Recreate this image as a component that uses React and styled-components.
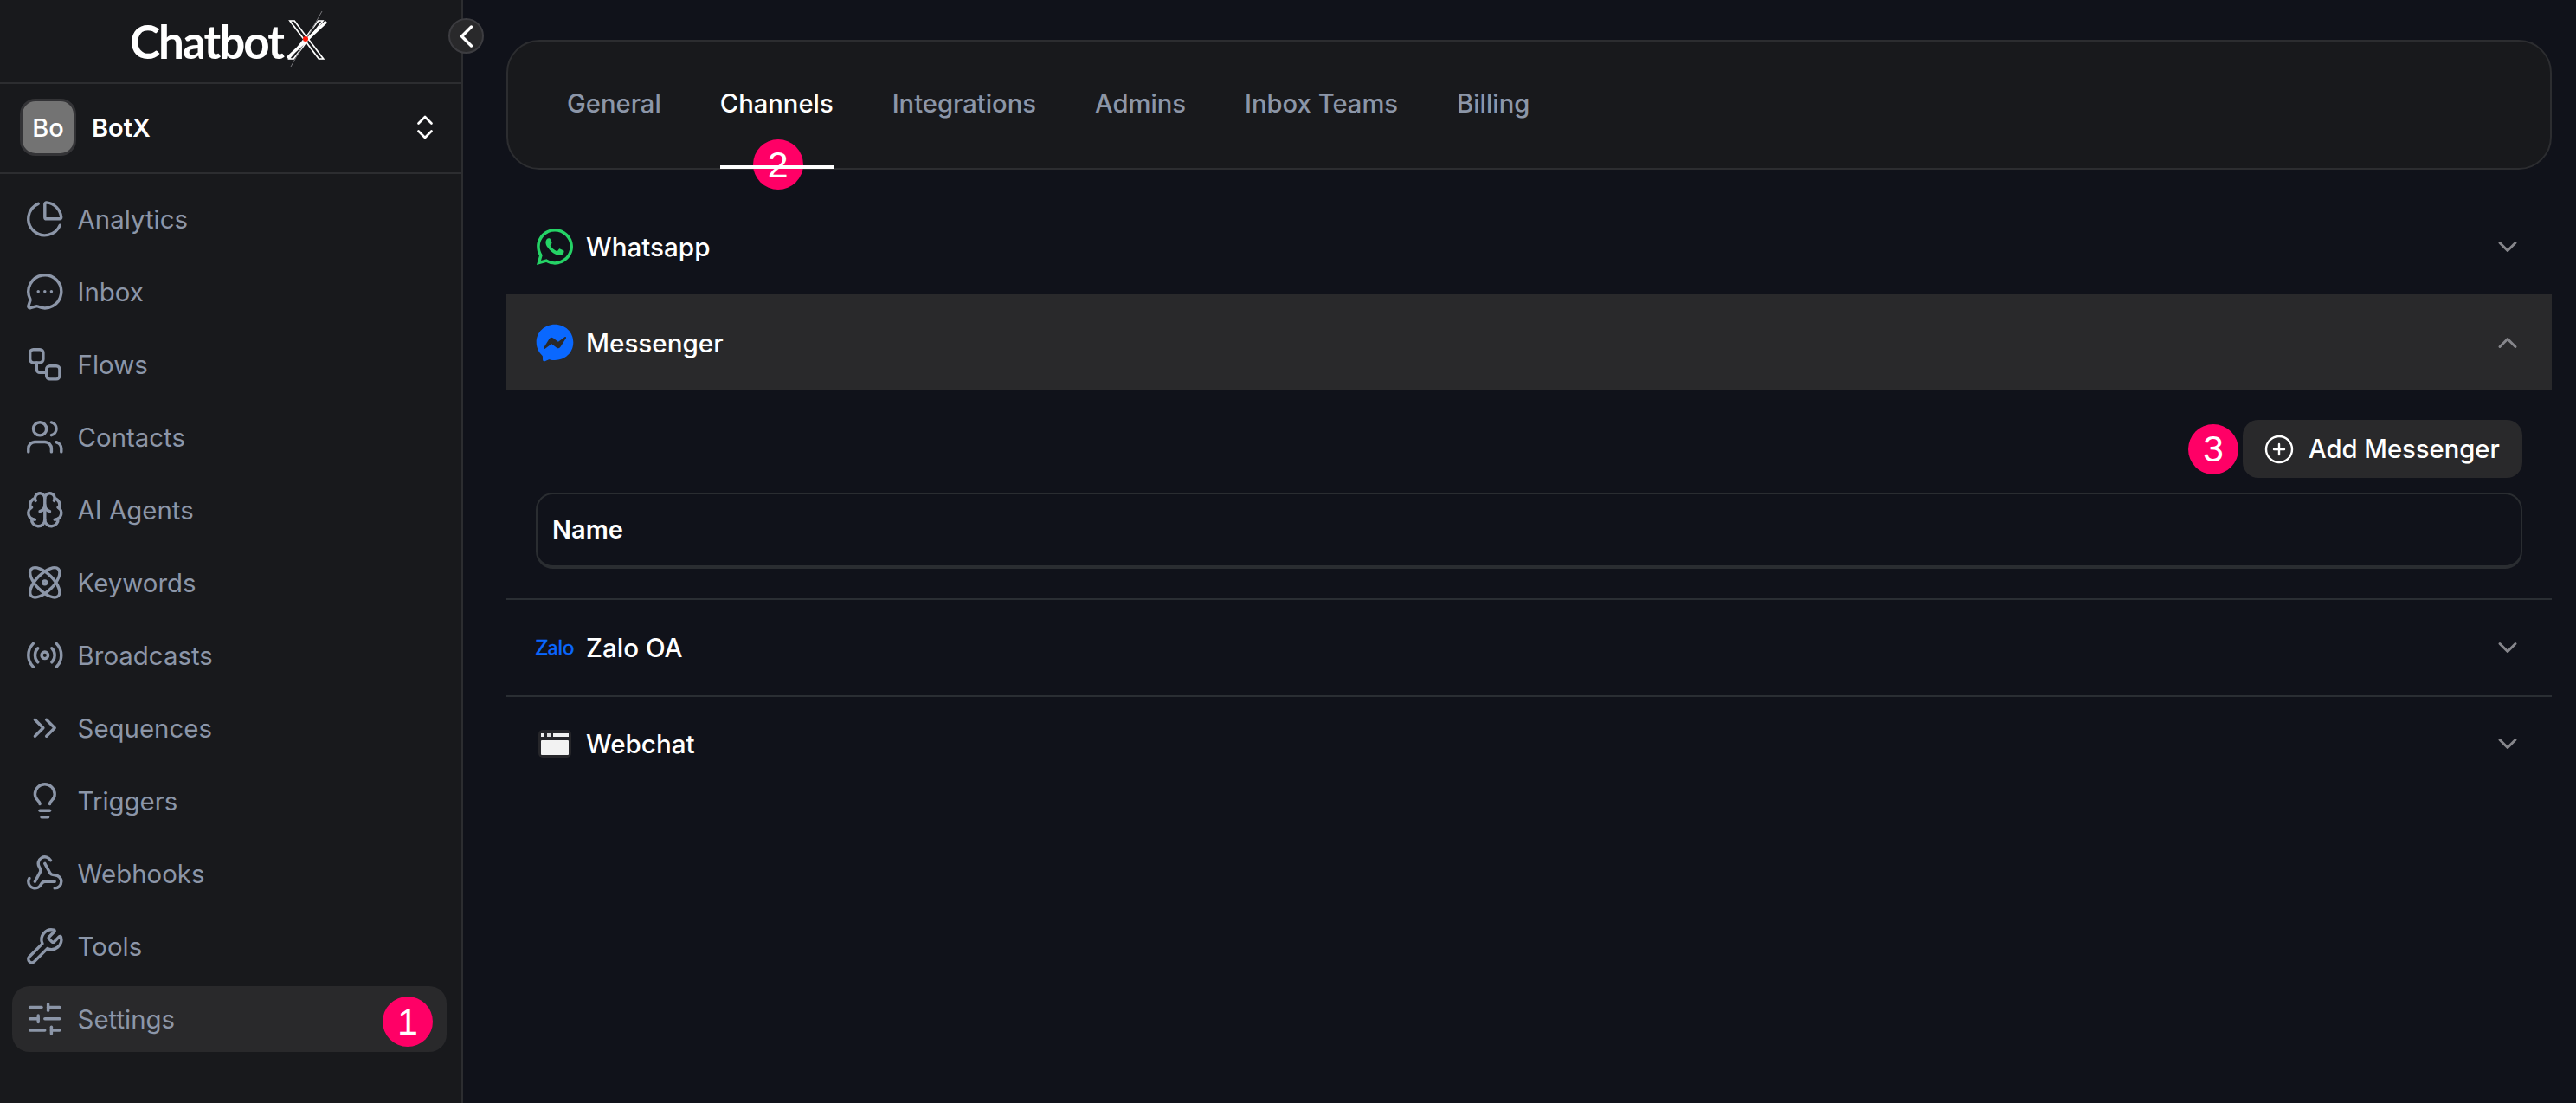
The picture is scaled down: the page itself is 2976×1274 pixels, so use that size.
import React from 'react';
import styled, { createGlobalStyle } from 'styled-components';
import {
  ChartPie, MessageCircleMore, Workflow, Users, Brain, Atom, Radio, ChevronsRight,
  Lightbulb, Webhook, Wrench, SlidersHorizontal, ChevronsUpDown, ChevronLeft,
  ChevronDown, ChevronUp, CirclePlus,
} from 'lucide-react';
import { FaWhatsapp, FaFacebookMessenger } from 'react-icons/fa';

const GlobalStyle = createGlobalStyle`
  html, body {
    margin: 0;
    padding: 0;
    background: #10121a;
  }
  * {
    box-sizing: border-box;
  }
`;

const Page = styled.div`
  display: flex;
  width: 2976px;
  height: 1274px;
  overflow: hidden;
  background: #10121a;
  font-family: Inter, "Liberation Sans", sans-serif;
  font-size: 30px;
  color: #fff;
`;

const Sidebar = styled.aside`
  position: relative;
  flex: 0 0 535px;
  display: flex;
  flex-direction: column;
  background: #18191c;
  border-right: 2px solid #2c2d30;
`;

const LogoBar = styled.div`
  height: 97px;
  display: flex;
  align-items: center;
  justify-content: center;
  border-bottom: 2px solid #2c2d30;
`;

const LogoText = styled.span`
  font-family: Lato, Inter, sans-serif;
  font-size: 53px;
  font-weight: 700;
  line-height: 1;
  letter-spacing: -2px;
  color: #fff;
`;

const LogoX = styled.span`
  position: relative;
  top: -2px;
  width: 40px;
  margin: 0 11px 0 5px;
  font-family: Inter, sans-serif;
  font-size: 60px;
  font-weight: 300;
  line-height: 1;
`;

const LogoGlyph = styled.span`
  display: inline-block;
  transform: scaleX(1.1);
  transform-origin: left center;
  color: transparent;
  -webkit-text-stroke: 1.5px #fff;
`;

const LogoMark = styled.svg`
  position: absolute;
  left: -4px;
  top: -12px;
`;

const CollapseButton = styled.button`
  position: absolute;
  left: 518px;
  top: 21px;
  width: 41px;
  height: 41px;
  padding: 0;
  display: flex;
  align-items: center;
  justify-content: center;
  border-radius: 50%;
  background: #29292b;
  border: 2px solid #3c3c40;
  color: #fff;

  svg {
    flex: none;
  }
`;

const TeamRow = styled.div`
  height: 104px;
  display: flex;
  align-items: center;
  gap: 18px;
  padding: 0 24px 2px 23px;
  border-bottom: 2px solid #2c2d30;
`;

const Avatar = styled.div`
  width: 65px;
  height: 66px;
  display: flex;
  align-items: center;
  justify-content: center;
  border-radius: 18px;
  background: #737373;
  border: 3px solid #333336;
  font-size: 29px;
  font-weight: 500;
`;

const TeamName = styled.div`
  flex: 1;
  font-size: 29px;
  font-weight: 600;
`;

const Nav = styled.nav`
  display: flex;
  flex-direction: column;
  gap: 8px;
  padding: 14px 17px 0 14px;
`;

const NavItem = styled.a`
  position: relative;
  height: 76px;
  display: flex;
  align-items: center;
  gap: 15px;
  padding-left: 15px;
  border-radius: 20px;
  background: ${(p) => (p.$active ? '#29292b' : 'transparent')};
  color: #8c96a8;
  font-size: 29.4px;
`;

const Badge = styled.div`
  width: 58px;
  height: 58px;
  flex: none;
  display: flex;
  align-items: center;
  justify-content: center;
  border-radius: 50%;
  background: #ff0066;
  color: #fff;
  font-family: "Liberation Sans", sans-serif;
  font-size: 43px;
  line-height: 1;
`;

const NavBadge = styled(Badge)`
  position: absolute;
  right: 16px;
  top: 12px;
`;

const TabBadge = styled(Badge)`
  position: absolute;
  left: 38px;
  top: 113px;
`;

const Main = styled.main`
  flex: 1;
  min-width: 0;
  padding: 46px 28px 0 50px;
`;

const TabBar = styled.div`
  height: 150px;
  display: flex;
  gap: 68px;
  padding: 0 68px;
  margin-bottom: 33px;
  background: #18191c;
  border: 2px solid #2c2d30;
  border-radius: 38px;
`;

const Tab = styled.div`
  position: relative;
  display: flex;
  align-items: center;
  padding-bottom: 3px;
  font-size: 29.2px;
  font-weight: 500;
  color: ${(p) => (p.$active ? '#fff' : '#8c96a8')};

  ${(p) => p.$active && `
    &::after {
      content: '';
      position: absolute;
      left: 0;
      right: 0;
      bottom: -1px;
      height: 4px;
      background: #fff;
    }
  `}
`;

const Section = styled.section`
  border-bottom: ${(p) => (p.$line ? '2px solid #2a2e33' : 'none')};
`;

const SectionHead = styled.div`
  height: ${(p) => p.$h || 111}px;
  display: flex;
  align-items: center;
  gap: 15px;
  padding: 0 33px 0 34px;
  background: ${(p) => (p.$open ? '#29292b' : 'transparent')};
  font-size: 29.6px;
  font-weight: 500;
`;

const IconSlot = styled.div`
  width: 44px;
  flex: none;
  display: flex;
  align-items: center;
  justify-content: center;
  margin-right: -1px;
`;

const SectionTitle = styled.div`
  flex: 1;
`;

const Chevron = styled.div`
  display: flex;
  color: #86868b;
`;

const ZaloLogo = styled.span`
  font-family: Lato, Inter, sans-serif;
  font-size: 23.5px;
  font-weight: 400;
  line-height: 1;
  color: #0a68ff;
  -webkit-text-stroke: 0.4px #0a68ff;
`;

const Panel = styled.div`
  display: flex;
  flex-direction: column;
  gap: 17px;
  padding: 34px 34px 34px;
`;

const Actions = styled.div`
  display: flex;
  align-items: center;
  justify-content: flex-end;
  gap: 5px;
`;

const AddButton = styled.button`
  width: 323px;
  height: 67px;
  display: flex;
  align-items: center;
  gap: 16px;
  padding: 0 0 0 24px;
  border: none;
  border-radius: 18px;
  background: #29292b;
  color: #fff;
  font-family: inherit;
  font-size: 29.2px;
  font-weight: 500;
  white-space: nowrap;
`;

const NameTable = styled.div`
  height: 88px;
  display: flex;
  align-items: center;
  padding: 0 17px 2px;
  border: 2px solid #2a2d31;
  border-bottom-width: 4px;
  border-radius: 20px;
  font-size: 29px;
  font-weight: 600;
`;

const navItems = [
  ['Analytics', ChartPie],
  ['Inbox', MessageCircleMore],
  ['Flows', Workflow],
  ['Contacts', Users],
  ['AI Agents', Brain],
  ['Keywords', Atom],
  ['Broadcasts', Radio],
  ['Sequences', ChevronsRight],
  ['Triggers', Lightbulb],
  ['Webhooks', Webhook],
  ['Tools', Wrench],
  ['Settings', SlidersHorizontal],
];

const tabs = ['General', 'Channels', 'Integrations', 'Admins', 'Inbox Teams', 'Billing'];

function WebchatIcon() {
  return (
    <svg width="38" height="32" viewBox="0 0 38 32">
      <rect width="38" height="32" rx="5" fill="#26262a" />
      <rect x="3" y="12" width="32" height="17" rx="1" fill="#f2f2f2" />
      <rect x="3" y="4" width="4" height="4" fill="#f2f2f2" />
      <rect x="10" y="4" width="4" height="4" fill="#f2f2f2" opacity="0.9" />
      <rect x="17" y="4" width="18" height="4" fill="#f2f2f2" />
    </svg>
  );
}

export default function App() {
  return (
    <Page>
      <GlobalStyle />
      <Sidebar>
        <LogoBar>
          <LogoText>Chatbot</LogoText>
          <LogoX>
            <LogoGlyph>X</LogoGlyph>
            <LogoMark width="56" height="78" viewBox="0 0 56 78">
              <line x1="44" y1="9" x2="8" y2="73" stroke="#77777b" strokeWidth="1" />
              <line x1="49" y1="21" x2="4" y2="63" stroke="#fff" strokeWidth="3.5" />
              <circle cx="25" cy="41" r="3" fill="#ff1a0a" />
            </LogoMark>
          </LogoX>
        </LogoBar>
        <CollapseButton>
          <ChevronLeft size={44} strokeWidth={1.9} />
        </CollapseButton>
        <TeamRow>
          <Avatar>Bo</Avatar>
          <TeamName>BotX</TeamName>
          <ChevronsUpDown size={36} strokeWidth={1.8} />
        </TeamRow>
        <Nav>
          {navItems.map(([label, Icon]) => (
            <NavItem key={label} $active={label === 'Settings'}>
              <Icon size={45.6} strokeWidth={1.8} />
              {label}
              {label === 'Settings' && <NavBadge>1</NavBadge>}
            </NavItem>
          ))}
        </Nav>
      </Sidebar>
      <Main>
        <TabBar>
          {tabs.map((tab) => (
            <Tab key={tab} $active={tab === 'Channels'}>
              {tab}
              {tab === 'Channels' && <TabBadge>2</TabBadge>}
            </Tab>
          ))}
        </TabBar>

        <Section>
          <SectionHead>
            <IconSlot>
              <FaWhatsapp size={48} color="#25d366" />
            </IconSlot>
            <SectionTitle>Whatsapp</SectionTitle>
            <Chevron><ChevronDown size={36} strokeWidth={2} /></Chevron>
          </SectionHead>
        </Section>

        <Section $line>
          <SectionHead $open>
            <IconSlot>
              <FaFacebookMessenger size={44} color="#0a68ff" />
            </IconSlot>
            <SectionTitle>Messenger</SectionTitle>
            <Chevron><ChevronUp size={36} strokeWidth={2} /></Chevron>
          </SectionHead>
          <Panel>
            <Actions>
              <Badge>3</Badge>
              <AddButton>
                <CirclePlus size={36} strokeWidth={1.6} />
                Add Messenger
              </AddButton>
            </Actions>
            <NameTable>Name</NameTable>
          </Panel>
        </Section>

        <Section $line>
          <SectionHead $h={110}>
            <IconSlot>
              <ZaloLogo>Zalo</ZaloLogo>
            </IconSlot>
            <SectionTitle>Zalo OA</SectionTitle>
            <Chevron><ChevronDown size={36} strokeWidth={2} /></Chevron>
          </SectionHead>
        </Section>

        <Section>
          <SectionHead $h={108}>
            <IconSlot>
              <WebchatIcon />
            </IconSlot>
            <SectionTitle>Webchat</SectionTitle>
            <Chevron><ChevronDown size={36} strokeWidth={2} /></Chevron>
          </SectionHead>
        </Section>
      </Main>
    </Page>
  );
}
